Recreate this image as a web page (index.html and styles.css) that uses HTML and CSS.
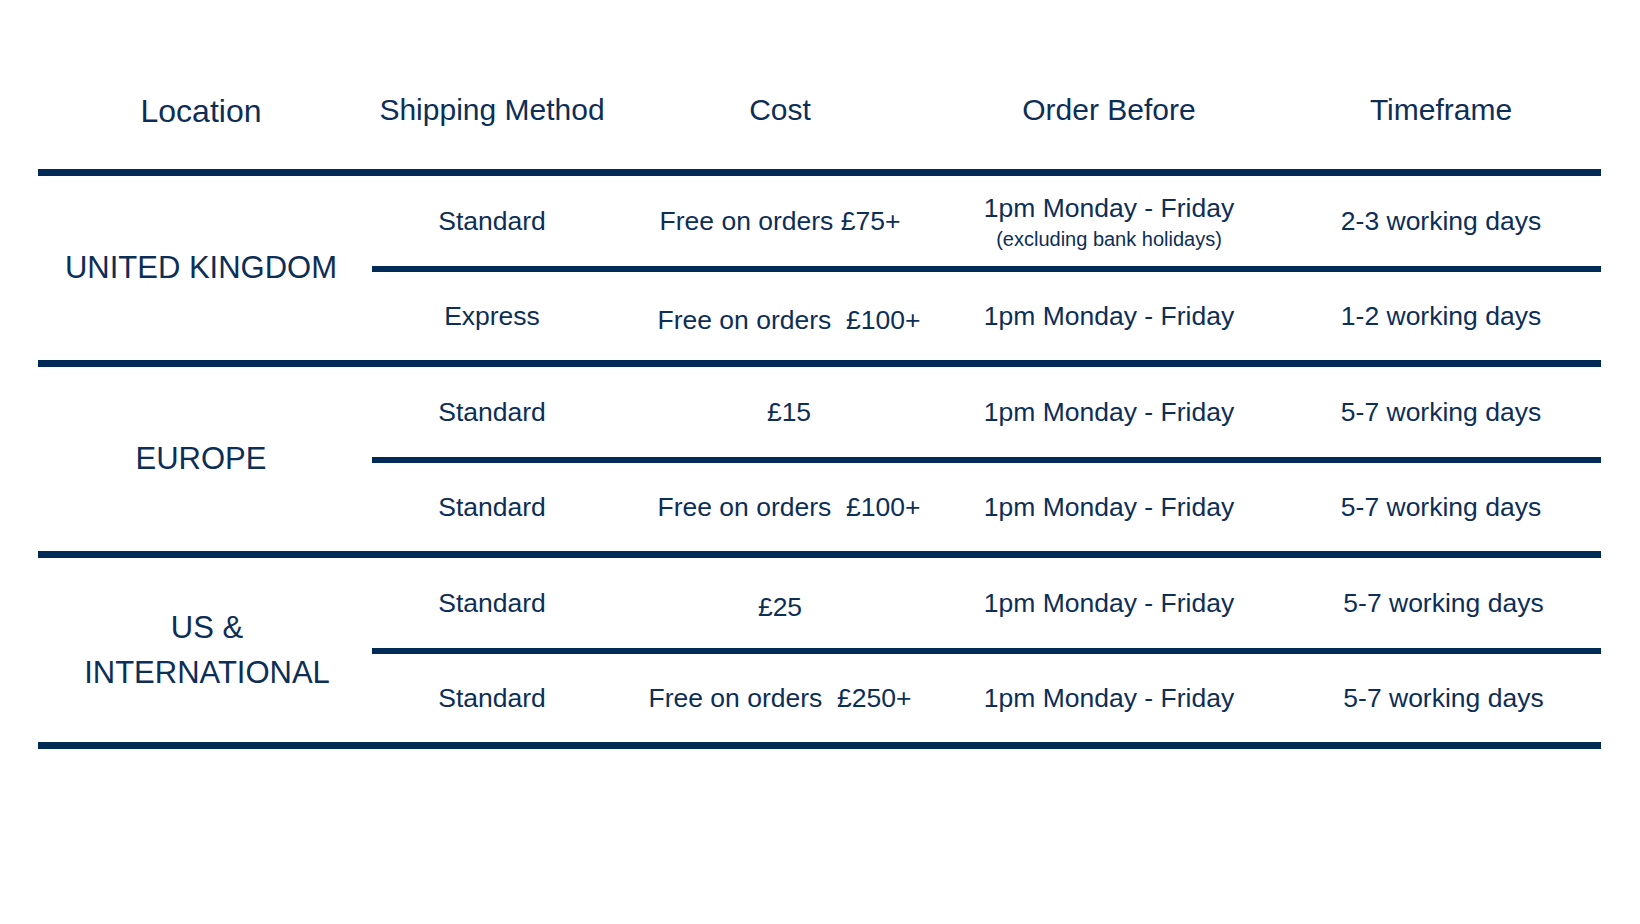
FILE: index.html
```html
<!DOCTYPE html>
<html lang="en">
<head>
<meta charset="utf-8">
<title>Shipping</title>
<link rel="stylesheet" href="styles.css">
</head>
<body>
<div class="table">
  <div class="head">
    <div class="hcell hloc">Location</div>
    <div class="hcell">Shipping Method</div>
    <div class="hcell">Cost</div>
    <div class="hcell">Order Before</div>
    <div class="hcell htime">Timeframe</div>
  </div>

  <div class="group">
    <div class="loc">UNITED KINGDOM</div>
    <div class="rows">
      <div class="row r1">
        <div class="cell">Standard</div>
        <div class="cell">Free on orders £75+</div>
        <div class="cell stack"><span>1pm Monday - Friday</span><span class="note">(excluding bank holidays)</span></div>
        <div class="cell time">2-3 working days</div>
      </div>
      <div class="row r2">
        <div class="cell">Express</div>
        <div class="cell low nudge">Free on orders  £100+</div>
        <div class="cell">1pm Monday - Friday</div>
        <div class="cell time">1-2 working days</div>
      </div>
    </div>
  </div>

  <div class="group">
    <div class="loc">EUROPE</div>
    <div class="rows">
      <div class="row r1">
        <div class="cell">Standard</div>
        <div class="cell shift">£15</div>
        <div class="cell">1pm Monday - Friday</div>
        <div class="cell time">5-7 working days</div>
      </div>
      <div class="row r2">
        <div class="cell">Standard</div>
        <div class="cell nudge">Free on orders  £100+</div>
        <div class="cell">1pm Monday - Friday</div>
        <div class="cell time">5-7 working days</div>
      </div>
    </div>
  </div>

  <div class="group">
    <div class="loc intl">US &amp;<br>INTERNATIONAL</div>
    <div class="rows">
      <div class="row r1">
        <div class="cell">Standard</div>
        <div class="cell low">£25</div>
        <div class="cell">1pm Monday - Friday</div>
        <div class="cell time wide">5-7 working days</div>
      </div>
      <div class="row r2">
        <div class="cell">Standard</div>
        <div class="cell">Free on orders  £250+</div>
        <div class="cell">1pm Monday - Friday</div>
        <div class="cell time wide">5-7 working days</div>
      </div>
    </div>
  </div>
</div>
</body>
</html>
```

FILE: styles.css
```css
* { box-sizing: border-box; }

html, body {
  margin: 0;
  padding: 0;
  background: #ffffff;
}

body {
  width: 1640px;
  height: 924px;
  font-family: "Liberation Sans", Arial, sans-serif;
  color: #0d2e56;
}

.table {
  margin-left: 38px;
  width: 1563px;
  border-bottom: 7px solid #022a56;
}

.head {
  display: grid;
  grid-template-columns: 334px 240px 336px 322px 331px;
  height: 169px;
  padding-top: 51px;
  align-items: center;
}

.hcell {
  text-align: center;
  font-size: 30px;
  white-space: nowrap;
}

.hloc {
  font-size: 32px;
  padding-right: 8px;
  padding-top: 2px;
}

.htime { padding-left: 11px; }

.group {
  display: flex;
  border-top: 7px solid #022a56;
}

.loc {
  width: 334px;
  flex: none;
  display: flex;
  align-items: center;
  justify-content: center;
  text-align: center;
  font-size: 31px;
  padding-right: 8px;
}

.loc.intl {
  line-height: 45px;
  padding-right: 0;
  padding-left: 4px;
}

.rows {
  flex: 1;
  display: flex;
  flex-direction: column;
}

.row {
  display: grid;
  grid-template-columns: 240px 336px 322px 331px;
  align-items: center;
}

.r1 { height: 90px; }

.r2 {
  height: 94px;
  border-top: 6px solid #022a56;
}

.cell {
  text-align: center;
  font-size: 26.5px;
  white-space: pre;
}

.cell.time { padding-left: 11px; }
.cell.time.wide { padding-left: 16px; }
.cell.low { padding-top: 8px; }
.cell.shift { padding-left: 18px; }
.cell.nudge { padding-left: 18px; }

.stack {
  display: flex;
  flex-direction: column;
  align-items: center;
  padding-top: 2px;
}

.note {
  font-size: 20px;
  margin-top: 4px;
}
```
